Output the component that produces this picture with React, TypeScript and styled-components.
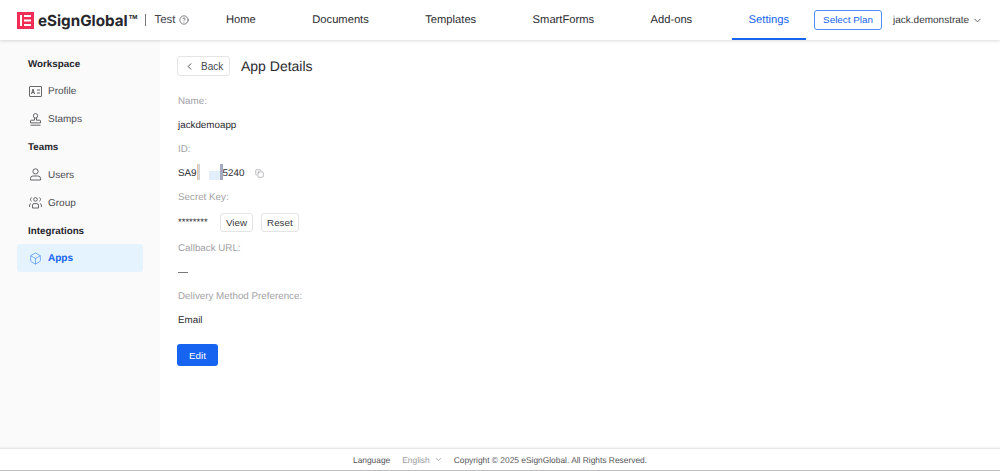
import React from 'react';
import styled, { createGlobalStyle } from 'styled-components';
import { ChevronDown, ChevronLeft, CircleHelp, Copy, Box } from 'lucide-react';

const GlobalStyle = createGlobalStyle`
  html, body {
    margin: 0;
    padding: 0;
    height: 100%;
    font-family: 'Liberation Sans', Arial, sans-serif;
    text-rendering: geometricPrecision;
    background: #fff;
    overflow: hidden;
  }
`;

const Page = styled.div`
  display: flex;
  flex-direction: column;
  height: 471px;
  width: 1000px;
`;

const Header = styled.header`
  display: flex;
  align-items: stretch;
  height: 40px;
  background: #fff;
  box-shadow: 0 1px 3px rgba(0, 0, 0, 0.14);
  position: relative;
  z-index: 2;
`;

const Brand = styled.div`
  display: flex;
  align-items: center;
  width: 209px;
  padding-left: 17px;
  box-sizing: border-box;
  flex: none;
`;

const LogoBox = styled.svg`
  width: 17px;
  height: 17px;
  flex: none;
`;

const LogoText = styled.span`
  margin-left: 4px;
  font-family: Inter, 'Liberation Sans', sans-serif;
  font-size: 15.2px;
  font-weight: 700;
  color: #26262c;
`;

const Tm = styled.sup`
  font-size: 5.5px;
  font-weight: 700;
  vertical-align: 7px;
  line-height: 0;
  margin-left: 1px;
`;

const BrandDivider = styled.span`
  width: 1px;
  height: 12px;
  background: #77777c;
  margin: 0 8px 0 8px;
`;

const EnvName = styled.span`
  font-size: 11.5px;
  color: #44444a;
  margin-right: 3px;
`;

const Nav = styled.nav`
  display: flex;
  align-items: stretch;
  gap: 22.4px;
`;

const NavItem = styled.a<{ $active?: boolean }>`
  display: flex;
  align-items: center;
  padding: 2px 17px 0;
  font-size: 11.2px;
  white-space: nowrap;
  color: ${p => (p.$active ? '#1664f0' : '#2b2b30')};
  border-bottom: 2px solid ${p => (p.$active ? '#1664f0' : 'transparent')};
`;

const PlanButton = styled.button`
  align-self: flex-start;
  margin: 10px 0 0 8px;
  width: 68px;
  height: 20px;
  padding: 0 0 2px;
  box-sizing: border-box;
  border: 1px solid #4d8df5;
  border-radius: 3px;
  background: #fff;
  color: #1664f0;
  font: 9.9px 'Liberation Sans', Arial, sans-serif;
`;

const UserMenu = styled.div`
  display: flex;
  align-items: center;
  gap: 3px;
  margin-left: 11px;
  font-size: 10px;
  white-space: nowrap;
  color: #38383d;
`;

const Body = styled.div`
  flex: 1;
  display: flex;
  min-height: 0;
`;

const Sidebar = styled.aside`
  width: 160px;
  flex: none;
  background: #fafafa;
  padding: 10px 17px 0;
  box-sizing: border-box;
`;

const GroupTitle = styled.div`
  height: 27.3px;
  line-height: 29px;
  font-size: 9.8px;
  font-weight: 700;
  color: #26262c;
  margin-left: 11px;
`;

const SideItem = styled.div<{ $active?: boolean }>`
  display: flex;
  align-items: center;
  height: 28px;
  width: 126px;
  border-radius: 3px;
  padding: 1px 0 0 12px;
  box-sizing: border-box;
  gap: 6px;
  font-size: 10px;
  font-weight: ${p => (p.$active ? 700 : 400)};
  color: ${p => (p.$active ? '#1664f0' : '#4a4a50')};
  background: ${p => (p.$active ? '#e5f3ff' : 'transparent')};
`;

const SideIcon = styled.svg`
  width: 13px;
  height: 13px;
  flex: none;
  margin-top: -1px;
`;

const Main = styled.main`
  flex: 1;
  padding: 16px 17px 0;
  background: #fff;
`;

const TitleRow = styled.div`
  display: flex;
  align-items: center;
  gap: 11px;
  height: 20px;
  margin-bottom: 13px;
`;

const BackButton = styled.button`
  display: flex;
  align-items: center;
  width: 53px;
  height: 20px;
  padding: 0 0 0 6px;
  gap: 6px;
  box-sizing: border-box;
  border: 1px solid #e4e4e6;
  border-radius: 3px;
  background: #fff;
  color: #48484d;
  font: 10px 'Liberation Sans', Arial, sans-serif;
`;

const PageTitle = styled.h1`
  margin: 0;
  font-size: 14px;
  font-weight: 400;
  color: #2b2b30;
`;

const Label = styled.div`
  height: 24px;
  line-height: 26px;
  padding-left: 1px;
  font-size: 9.8px;
  color: #a2a2a6;
`;

const Value = styled.div<{ $tall?: boolean }>`
  display: flex;
  align-items: center;
  height: ${p => (p.$tall ? 27 : 24)}px;
  padding-left: 1px;
  font-size: 9.8px;
  color: #2b2b30;
`;

const Redaction = styled.span`
  position: relative;
  display: inline-block;
  width: 26px;
  height: 24px;
`;

const RedactionBar = styled.i<{ $left: number; $top: number; $w: number; $h: number; $color: string }>`
  position: absolute;
  left: ${p => p.$left}px;
  top: ${p => p.$top}px;
  width: ${p => p.$w}px;
  height: ${p => p.$h}px;
  background: ${p => p.$color};
`;

const SmallButton = styled.button`
  height: 19px;
  padding: 0 5px;
  box-sizing: border-box;
  border: 1px solid #e4e4e6;
  border-radius: 3px;
  background: #fff;
  color: #38383d;
  font: 9.8px 'Liberation Sans', Arial, sans-serif;
  margin-left: 8px;
`;

const Mask = styled.span`
  width: 34px;
  font-size: 9.5px;
`;

const Dash = styled.span`
  display: block;
  width: 10px;
  height: 1px;
  background: #77777c;
`;

const EditButton = styled.button`
  display: block;
  margin-top: 12px;
  width: 41px;
  height: 22px;
  padding: 0;
  border: none;
  border-radius: 3px;
  background: #1664f0;
  color: #fff;
  font: 9.8px 'Liberation Sans', Arial, sans-serif;
`;

const Footer = styled.footer`
  flex: none;
  display: flex;
  align-items: center;
  justify-content: center;
  height: 23px;
  box-sizing: border-box;
  border-top: 1px solid #e8e8e8;
  border-bottom: 1px solid #bdbdbd;
  background: #fff;
  font-size: 8.4px;
  color: #55555a;
  box-shadow: 0 -1px 2px rgba(0, 0, 0, 0.05);
`;

const Lang = styled.span`
  display: flex;
  align-items: center;
  gap: 4px;
  margin: 0 11px 0 12px;
  color: #9a9a9e;
`;

const navItems = [
  { label: 'Home' },
  { label: 'Documents' },
  { label: 'Templates' },
  { label: 'SmartForms' },
  { label: 'Add-ons' },
  { label: 'Settings', active: true },
];

const App: React.FC = () => (
  <Page>
    <GlobalStyle />
    <Header>
      <Brand>
        <LogoBox viewBox="0 0 17 17">
          <rect width="17" height="17" fill="#f02d55" />
          <path d="M3 3h2v11H3zM7 3h7v2H7zM7 7.5h7v2H7zM7 12h7v2H7z" fill="#fff" />
        </LogoBox>
        <LogoText>eSignGlobal<Tm>TM</Tm></LogoText>
        <BrandDivider />
        <EnvName>Test</EnvName>
        <CircleHelp size={10} color="#44444a" strokeWidth={1.6} />
      </Brand>
      <Nav>
        {navItems.map(n => (
          <NavItem key={n.label} $active={n.active}>{n.label}</NavItem>
        ))}
      </Nav>
      <PlanButton>Select Plan</PlanButton>
      <UserMenu>
        jack.demonstrate
        <ChevronDown size={11} color="#55555a" />
      </UserMenu>
    </Header>
    <Body>
      <Sidebar>
        <GroupTitle>Workspace</GroupTitle>
        <SideItem>
          <SideIcon viewBox="0 0 13 13" fill="none" stroke="#55555a" strokeWidth="0.9">
            <rect x="0.5" y="1.5" width="12" height="10" rx="0.5" />
            <path d="M2.5 9l1.5-5 1.5 5M3 7.4h2M8 5h3M8 8h3" />
          </SideIcon>
          Profile
        </SideItem>
        <SideItem>
          <SideIcon viewBox="0 0 13 13" fill="none" stroke="#55555a" strokeWidth="0.9">
            <circle cx="6.5" cy="2.8" r="2.2" />
            <path d="M5.5 5v2.2H2.2a.7.7 0 0 0-.7.7v2h10v-2a.7.7 0 0 0-.7-.7H7.5V5M1.5 12.2h10" />
          </SideIcon>
          Stamps
        </SideItem>
        <GroupTitle>Teams</GroupTitle>
        <SideItem>
          <SideIcon viewBox="0 0 13 13" fill="none" stroke="#55555a" strokeWidth="0.9">
            <circle cx="6.5" cy="3.4" r="2.6" />
            <path d="M1.5 12v-1.6a2.4 2.4 0 0 1 2.4-2.4h5.2a2.4 2.4 0 0 1 2.4 2.4V12z" />
          </SideIcon>
          Users
        </SideItem>
        <SideItem>
          <SideIcon viewBox="0 0 13 13" fill="none" stroke="#55555a" strokeWidth="0.9">
            <circle cx="6.5" cy="3.4" r="1.8" />
            <path d="M3.5 12V9.2a1.6 1.6 0 0 1 1.6-1.6h2.8a1.6 1.6 0 0 1 1.6 1.6V12zM.6 11V8.6l1.4-1M12.4 11V8.6l-1.4-1M2.6 1.6a2 2 0 0 0 0 3.6M10.4 1.6a2 2 0 0 1 0 3.6" />
          </SideIcon>
          Group
        </SideItem>
        <GroupTitle>Integrations</GroupTitle>
        <SideItem $active>
          <Box size={13} color="#4a90f0" strokeWidth={1.3} />
          Apps
        </SideItem>
      </Sidebar>
      <Main>
        <TitleRow>
          <BackButton>
            <ChevronLeft size={11} color="#48484d" />
            Back
          </BackButton>
          <PageTitle>App Details</PageTitle>
        </TitleRow>
        <Label>Name:</Label>
        <Value>jackdemoapp</Value>
        <Label>ID:</Label>
        <Value>
          SA9
          <Redaction>
            <RedactionBar $left={0} $top={3} $w={1} $h={16} $color="#f0c8a0" />
            <RedactionBar $left={1} $top={3} $w={2} $h={16} $color="#d4d4d8" />
            <RedactionBar $left={12} $top={10} $w={14} $h={9} $color="#e2effa" />
            <RedactionBar $left={23} $top={3} $w={3} $h={16} $color="#a6acc0" />
          </Redaction>
          5240
          <Copy size={9} color="#77777c" strokeWidth={1.3} style={{ marginLeft: 11 }} />
        </Value>
        <Label>Secret Key:</Label>
        <Value $tall>
          <Mask>********</Mask>
          <SmallButton>View</SmallButton>
          <SmallButton>Reset</SmallButton>
        </Value>
        <Label>Callback URL:</Label>
        <Value><Dash /></Value>
        <Label>Delivery Method Preference:</Label>
        <Value>Email</Value>
        <EditButton>Edit</EditButton>
      </Main>
    </Body>
    <Footer>
      Language
      <Lang>English <ChevronDown size={9} color="#9a9a9e" /></Lang>
      Copyright © 2025 eSignGlobal. All Rights Reserved.
    </Footer>
  </Page>
);

export default App;
